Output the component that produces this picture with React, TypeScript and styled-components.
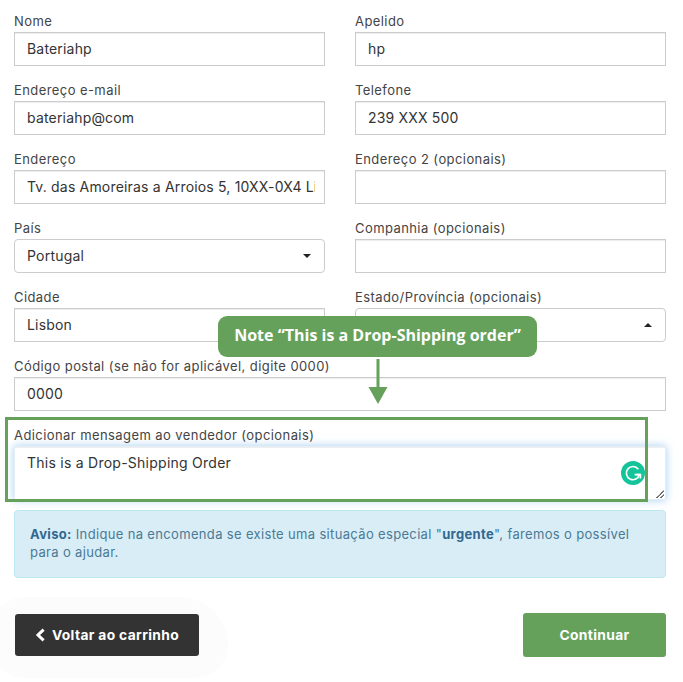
import React from "react";
import styled, { createGlobalStyle } from "styled-components";

const Global = createGlobalStyle`
  html, body { margin: 0; padding: 0; background: #fff; }
  body { font-family: Inter, "Noto Sans", sans-serif; color: #333; }
  * { box-sizing: border-box; }
`;

const Page = styled.div`
  position: relative;
  width: 683px;
  height: 682px;
  overflow: hidden;
  padding: 11px 17px 0 14px;
`;

const Blob = styled.div`
  position: absolute;
  left: -8px;
  top: 597px;
  width: 236px;
  height: 81px;
  border-radius: 40px 60px 40px 40px;
  background: #fcfcfc;
`;

const Form = styled.form`
  position: relative;
  display: grid;
  grid-template-columns: 311px 311px;
  column-gap: 30px;
  margin: 0;
`;

const Field = styled.div<{ $full?: boolean; $tight?: boolean }>`
  grid-column: ${(p) => (p.$full ? "1 / -1" : "auto")};
  margin-bottom: ${(p) => (p.$tight ? "10px" : "14px")};
`;

const Label = styled.label`
  display: block;
  height: 21px;
  font-size: 13px;
  line-height: 21px;
  letter-spacing: 0.42px;
  color: #444;
  white-space: nowrap;
`;

const Input = styled.input`
  display: block;
  width: 100%;
  height: 34px;
  padding: 0 9px 1px 12px;
  border: 1px solid #ccc;
  border-radius: 0;
  box-shadow: inset 0 1px 1px rgba(0, 0, 0, 0.075);
  background: #fff;
  font-family: inherit;
  font-size: 14px;
  letter-spacing: 0.18px;
  color: #333;
  outline: none;
`;

const SelectBox = styled.div`
  display: flex;
  align-items: center;
  justify-content: space-between;
  height: 34px;
  padding: 0 13px 1px 12px;
  border: 1px solid #ccc;
  border-radius: 4px;
  background: #fff;
  font-size: 14px;
  letter-spacing: 0.22px;
  color: #333;
`;

const Caret = styled.span<{ $up?: boolean }>`
  width: 0;
  height: 0;
  border-left: 4px solid transparent;
  border-right: 4px solid transparent;
  border-top: ${(p) => (p.$up ? "0" : "4px solid #222")};
  border-bottom: ${(p) => (p.$up ? "4px solid #222" : "0")};
`;

const TextArea = styled.textarea`
  display: block;
  width: 100%;
  height: 54px;
  padding: 5px 12px;
  border: 1px solid #e4eef6;
  border-radius: 0;
  box-shadow: inset 0 1px 1px rgba(0, 0, 0, 0.075), 0 0 8px rgba(102, 175, 233, 0.6);
  background: #fff;
  font-family: inherit;
  font-size: 14px;
  line-height: 22px;
  letter-spacing: 0.25px;
  color: #333;
  outline: none;
`;

const Alert = styled.div`
  position: relative;
  height: 68px;
  padding: 14px 15px;
  border: 1px solid #bce8f1;
  border-radius: 4px;
  background: #d9edf7;
  font-size: 13px;
  line-height: 18px;
  letter-spacing: 0.34px;
  color: #4a7a94;
  b { font-weight: 700; color: #31688f; }
`;

const Actions = styled.div`
  position: relative;
  display: flex;
  justify-content: space-between;
  align-items: center;
  margin: 35px 0 0 1px;
`;

const BackButton = styled.button`
  display: flex;
  align-items: center;
  justify-content: center;
  gap: 6px;
  width: 184px;
  height: 42px;
  border: 0;
  border-radius: 3px;
  background: #333;
  color: #fff;
  font-family: inherit;
  font-size: 13.8px;
  font-weight: 700;
  letter-spacing: 0.35px;
`;

const NextButton = styled.button`
  width: 143px;
  height: 44px;
  border: 0;
  border-radius: 3px;
  background: #65a15a;
  color: #fff;
  font-family: inherit;
  font-size: 13.8px;
  font-weight: 700;
  letter-spacing: 0.35px;
`;

const Highlight = styled.div`
  position: absolute;
  left: 5px;
  top: 417px;
  width: 643px;
  height: 85px;
  border: 3px solid #65a15a;
`;

const Callout = styled.div`
  position: absolute;
  left: 218px;
  top: 316px;
  width: 319px;
  height: 41px;
  display: flex;
  align-items: center;
  justify-content: center;
  padding-bottom: 4px;
  border-radius: 9px;
  background: #65a15a;
  color: #fff;
  font-family: "Open Sans", sans-serif;
  font-size: 16px;
  font-weight: 700;
  white-space: nowrap;
`;

const ArrowSvg = styled.svg`
  position: absolute;
  left: 368px;
  top: 359px;
`;

const GrammarlySvg = styled.svg`
  position: absolute;
  left: 621px;
  top: 461px;
`;

const ResizeSvg = styled.svg`
  position: absolute;
  left: 655px;
  top: 489px;
`;

const Chevron = () => (
  <svg width="11" height="14" viewBox="0 0 11 14">
    <path d="M8.6 1.6L3 7L8.6 12.4" fill="none" stroke="#fff" strokeWidth="3" />
  </svg>
);

const App = () => (
  <Page>
    <Global />
    <Blob />
    <Form>
      <Field><Label>Nome</Label><Input readOnly value="Bateriahp" /></Field>
      <Field><Label>Apelido</Label><Input readOnly value="hp" /></Field>
      <Field><Label>Endereço e-mail</Label><Input readOnly value="bateriahp@com" /></Field>
      <Field><Label>Telefone</Label><Input readOnly value="239 XXX 500" /></Field>
      <Field><Label>Endereço</Label><Input readOnly value="Tv. das Amoreiras a Arroios 5, 10XX-0X4 Li" /></Field>
      <Field><Label>Endereço 2 (opcionais)</Label><Input readOnly value="" /></Field>
      <Field><Label>País</Label><SelectBox>Portugal<Caret /></SelectBox></Field>
      <Field><Label>Companhia (opcionais)</Label><Input readOnly value="" /></Field>
      <Field><Label>Cidade</Label><Input readOnly value="Lisbon" /></Field>
      <Field><Label>Estado/Província (opcionais)</Label><SelectBox>&nbsp;<Caret $up /></SelectBox></Field>
      <Field $full><Label>Código postal (se não for aplicável, digite 0000)</Label><Input readOnly value="0000" /></Field>
      <Field $full $tight><Label>Adicionar mensagem ao vendedor (opcionais)</Label><TextArea readOnly value="This is a Drop-Shipping Order" /></Field>
    </Form>
    <Alert>
      <b>Aviso:</b> Indique na encomenda se existe uma situação especial "<b>urgente</b>", faremos o possível para o ajudar.
    </Alert>
    <Actions>
      <BackButton><Chevron />Voltar ao carrinho</BackButton>
      <NextButton>Continuar</NextButton>
    </Actions>
    <Highlight />
    <Callout>Note “This is a Drop-Shipping order”</Callout>
    <ArrowSvg width="20" height="46" viewBox="0 0 20 46">
      <rect x="8.5" y="0" width="3" height="30" fill="#65a15a" />
      <path d="M0.5 28H19.5L10 45Z" fill="#65a15a" />
    </ArrowSvg>
    <GrammarlySvg width="24" height="24" viewBox="0 0 24 24">
      <circle cx="12" cy="12" r="12" fill="#15c39a" />
      <path d="M17.3 8.2A6.6 6.6 0 1 0 18.4 13.6H13.6" fill="none" stroke="#fff" strokeWidth="1.7" />
      <path d="M15.4 13.6H19.4V17.4" fill="none" stroke="#fff" strokeWidth="1.7" />
    </GrammarlySvg>
    <ResizeSvg width="10" height="10" viewBox="0 0 10 10">
      <path d="M1 9L9 1M5 9L9 5" stroke="#555" strokeWidth="1" strokeDasharray="1.2 0.6" fill="none" />
    </ResizeSvg>
  </Page>
);

export default App;
